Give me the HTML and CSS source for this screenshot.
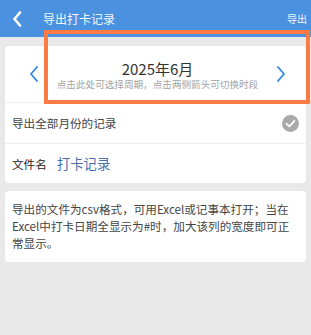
FILE: index.html
```html
<!DOCTYPE html>
<html lang="zh">
<head>
<meta charset="utf-8">
<link rel="stylesheet" href="styles.css">
</head>
<body>
<header class="topbar">
  <svg class="back" width="10" height="16" viewBox="0 0 10 16"><path d="M8 1.5 L2.5 8 L8 14.5" fill="none" stroke="#fff" stroke-width="2.6" stroke-linecap="round" stroke-linejoin="round"/></svg>
  <span class="title">导出打卡记录</span>
  <span class="action">导出</span>
</header>
<main class="content">
  <section class="card">
    <div class="date-row">
      <svg class="arrow" width="10" height="16" viewBox="0 0 10 16"><path d="M8 1 L2 8 L8 15" fill="none" stroke="#2b8ae6" stroke-width="1.8" stroke-linecap="round" stroke-linejoin="round"/></svg>
      <div class="date-center">
        <div class="date-title">2025年6月</div>
        <div class="date-hint">点击此处可选择周期，点击两侧箭头可切换时段</div>
      </div>
      <svg class="arrow" width="10" height="16" viewBox="0 0 10 16"><path d="M2 1 L8 8 L2 15" fill="none" stroke="#2b8ae6" stroke-width="1.8" stroke-linecap="round" stroke-linejoin="round"/></svg>
    </div>
    <div class="row">
      <span class="row-label">导出全部月份的记录</span>
      <svg class="check" width="17" height="17" viewBox="0 0 17 17"><circle cx="8.5" cy="8.5" r="8.5" fill="#a9a9a9"/><path d="M4.6 8.8 L7.4 11.4 L12.4 5.8" fill="none" stroke="#fff" stroke-width="1.8" stroke-linecap="round" stroke-linejoin="round"/></svg>
    </div>
    <div class="row">
      <span class="file-label">文件名</span>
      <span class="file-name">打卡记录</span>
    </div>
  </section>
  <section class="card note">
    导出的文件为csv格式，可用Excel或记事本打开；当在Excel中打卡日期全显示为#时，加大该列的宽度即可正常显示。
  </section>
</main>
<div class="highlight"></div>
</body>
</html>
```
FILE: styles.css
```css
* { box-sizing: border-box; }
html, body {
  margin: 0;
  padding: 0;
}
body {
  width: 311px;
  height: 335px;
  background: #e9e9e9;
  font-family: "Noto Sans CJK SC", "Noto Sans", sans-serif;
  position: relative;
  overflow: hidden;
}
.topbar {
  height: 37px;
  background: #4a92df;
  display: flex;
  align-items: center;
  padding: 0 4px 0 12px;
  color: #f2f6fb;
}
.back { margin-right: 21px; margin-top: 1px; }
.title {
  font-size: 12px;
  flex: 1;
  line-height: 1;
}
.action {
  font-size: 10px;
  line-height: 1;
}
.content {
  padding: 9px 5px 0 5px;
  display: flex;
  flex-direction: column;
  gap: 8px;
}
.card {
  background: #fff;
  border-radius: 4px;
}
.date-row {
  height: 57px;
  display: flex;
  align-items: center;
  padding: 0 20px 0 24px;
  border-bottom: 1px solid #eeeeee;
}
.date-center {
  flex: 1;
  text-align: center;
  padding-top: 2px;
}
.date-title {
  font-size: 15px;
  color: #333;
  line-height: 18px;
}
.date-hint {
  font-size: 9.6px;
  color: #a3a3a3;
  line-height: 13px;
  white-space: nowrap;
}
.row {
  height: 40px;
  display: flex;
  align-items: center;
  padding: 0 6px 0 7px;
}
.row + .row { border-top: 1px solid #f0f0f0; }
.row-label {
  font-size: 11.6px;
  color: #444;
  flex: 1;
}
.check { margin-right: 1px; }
.file-label {
  font-size: 11.6px;
  color: #222;
  width: 45px;
}
.file-name {
  font-size: 13.3px;
  color: #4770ab;
}
.note {
  padding: 10px 6px 10px 7px;
  font-size: 11.6px;
  line-height: 17px;
  color: #444;
}
.highlight {
  position: absolute;
  left: 44px;
  top: 30px;
  width: 266px;
  height: 74px;
  border: 4px solid #fb7b45;
}
```
